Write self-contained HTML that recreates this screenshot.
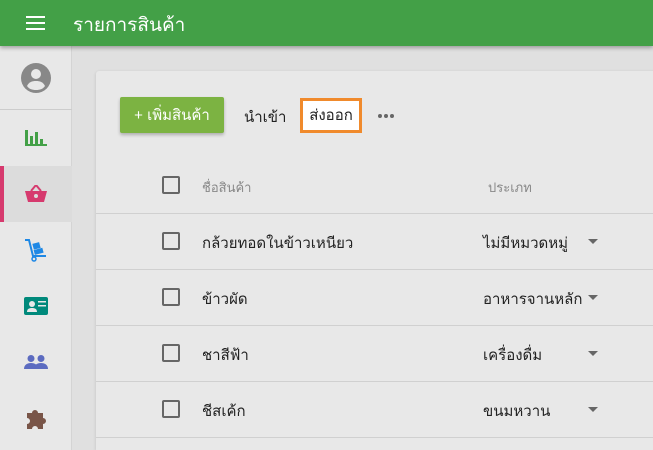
<!DOCTYPE html>
<html style="width:653px;height:450px;overflow:hidden"><head><meta charset="utf-8"><style>
*{box-sizing:border-box;margin:0;padding:0}
body{width:653px;height:450px;overflow:hidden;background:#e0e0e0;font-family:"Liberation Sans","Noto Sans CJK SC",sans-serif;position:relative}
.hdr{position:absolute;left:0;top:0;width:653px;height:46px;background:#43a047;box-shadow:0 2px 4px rgba(0,0,0,.3);z-index:3}
.hdr .t{position:absolute;left:73px;top:10px;color:#fff;font-size:19px}
.side{position:absolute;left:0;top:46px;width:72px;height:404px;background:#e8e8e8;border-right:1px solid #d4d4d4}
.si{position:absolute;left:0;width:72px;height:56px;display:flex;align-items:center;justify-content:center}
.card{position:absolute;left:96px;top:71px;width:600px;height:379px;background:#e8e8e8;border-radius:3px 3px 0 0;box-shadow:0 1px 3px rgba(0,0,0,.15)}
.btn{position:absolute;left:24px;top:26px;width:104px;height:36px;background:#7cb342;color:#fff;font-size:14px;border-radius:2px;box-shadow:0 2px 3px rgba(0,0,0,.25);display:flex;align-items:center;justify-content:center}
.tx{position:absolute;font-size:14px;color:#222}
.row{position:absolute;left:0;width:600px;border-bottom:1px solid #d0d0d0}
.cb{position:absolute;left:66px;width:18px;height:18px;border:2px solid #666;border-radius:2px}
.arr{position:absolute;left:492px;width:0;height:0;border-left:5px solid transparent;border-right:5px solid transparent;border-top:5px solid #666}
.dot{position:absolute;top:43px;width:4px;height:4px;border-radius:2px;background:#666}
</style></head><body>
<div class="hdr">
<svg style="position:absolute;left:26px;top:16px" width="20" height="14"><rect y="0" width="19" height="2" fill="#fff"/><rect y="6" width="19" height="2" fill="#fff"/><rect y="12" width="19" height="2" fill="#fff"/></svg>
<div class="t">รายการสินค้า</div></div>
<div class="side">
<div class="si" style="top:0;height:64px;border-bottom:1px solid #ccc"><svg width="30" height="30" viewBox="0 0 30 30"><circle cx="15" cy="15" r="15" fill="#888"/><circle cx="15" cy="11" r="5" fill="#e8e8e8"/><path d="M6 23c2-4 5-5 9-5s7 1 9 5c-2 3-5 4-9 4s-7-1-9-4z" fill="#e8e8e8"/></svg></div>
<div class="si" style="top:64px"><svg width="22" height="16"><rect x="0" y="0" width="3" height="16" fill="#43a047"/><rect x="5" y="6" width="3" height="10" fill="#43a047"/><rect x="10" y="2" width="3" height="14" fill="#43a047"/><rect x="15" y="9" width="3" height="7" fill="#43a047"/><rect x="0" y="14" width="22" height="2" fill="#43a047"/></svg></div>
<div class="si" style="top:120px;background:#dcdcdc;border-left:4px solid #d63a6e"><svg width="24" height="18" viewBox="0 0 24 18" style="margin-left:-4px"><path d="M7 6 12 0 17 6" stroke="#d63a6e" stroke-width="2" fill="none"/><path d="M1 6h22l-3 11H4z" fill="#d63a6e"/><circle cx="12" cy="11" r="2" fill="#dcdcdc"/></svg></div>
<div class="si" style="top:176px"><svg width="24" height="24" viewBox="0 0 24 24"><path d="M1 2h4l4 16h13" stroke="#1e88e5" stroke-width="2" fill="none"/><rect x="9" y="5" width="7" height="6" fill="#1e88e5" transform="rotate(-15 12 8)"/><rect x="10" y="11" width="9" height="5" fill="#1e88e5" transform="rotate(-15 14 13)"/><circle cx="10" cy="21" r="2" fill="none" stroke="#1e88e5" stroke-width="1.5"/></svg></div>
<div class="si" style="top:232px"><svg width="24" height="18"><rect width="24" height="18" rx="2" fill="#00897b"/><circle cx="8" cy="7" r="3" fill="#e8e8e8"/><path d="M3 15c0-3 2-4 5-4s5 1 5 4z" fill="#e8e8e8"/><rect x="14" y="4" width="8" height="1.5" fill="#e8e8e8"/><rect x="14" y="8" width="8" height="1.5" fill="#e8e8e8"/></svg></div>
<div class="si" style="top:288px"><svg width="24" height="14"><circle cx="7" cy="3.5" r="3.5" fill="#5c6bc0"/><circle cx="17" cy="3.5" r="3.5" fill="#5c6bc0"/><path d="M0 14c0-4 3-6 7-6s7 2 7 6z" fill="#5c6bc0"/><path d="M10 14c0-4 3-6 7-6s7 2 7 6z" fill="#5c6bc0"/></svg></div>
<div class="si" style="top:344px"><svg width="22" height="22" viewBox="0 0 22 22"><path d="M2 6h5a3 3 0 1 1 6 0h5v5a3 3 0 1 1 0 6v5h-5a3 3 0 1 0-6 0H2v-5a3 3 0 1 0 0-6z" fill="#795548"/></svg></div>
</div>
<div class="card">
<div class="btn" style="font-size:15px">+ เพิ่มสินค้า</div>
<div class="tx" style="left:148px;top:34px;font-size:15px">นำเข้า</div>
<div style="position:absolute;left:204px;top:27px;width:62px;height:35px;border:3px solid #f08a2c;background:#fff;font-size:15px;color:#222;text-align:center;line-height:29px">ส่งออก</div>
<div class="dot" style="left:282px"></div><div class="dot" style="left:288px"></div><div class="dot" style="left:294px"></div>
<div class="row" style="top:86px;height:57px"><div class="cb" style="top:19px"></div><div class="tx" style="left:106px;top:20px;font-size:13px;color:#888">ชื่อสินค้า</div><div class="tx" style="left:392px;top:20px;font-size:13px;color:#888">ประเภท</div></div>
<div class="row" style="top:143px;height:56px"><div class="cb" style="top:18px"></div><div class="tx" style="left:106px;top:17px;font-size:15px">กล้วยทอดในข้าวเหนียว</div><div class="tx" style="left:387px;top:17px;font-size:15px">ไม่มีหมวดหมู่</div><div class="arr" style="top:25px"></div></div>
<div class="row" style="top:199px;height:56px"><div class="cb" style="top:18px"></div><div class="tx" style="left:106px;top:17px;font-size:15px">ข้าวผัด</div><div class="tx" style="left:387px;top:17px;font-size:15px">อาหารจานหลัก</div><div class="arr" style="top:25px"></div></div>
<div class="row" style="top:255px;height:56px"><div class="cb" style="top:18px"></div><div class="tx" style="left:106px;top:17px;font-size:15px">ชาสีฟ้า</div><div class="tx" style="left:387px;top:17px;font-size:15px">เครื่องดื่ม</div><div class="arr" style="top:25px"></div></div>
<div class="row" style="top:311px;height:56px"><div class="cb" style="top:18px"></div><div class="tx" style="left:106px;top:17px;font-size:15px">ชีสเค้ก</div><div class="tx" style="left:387px;top:17px;font-size:15px">ขนมหวาน</div><div class="arr" style="top:25px"></div></div>
</div>
</body></html>
